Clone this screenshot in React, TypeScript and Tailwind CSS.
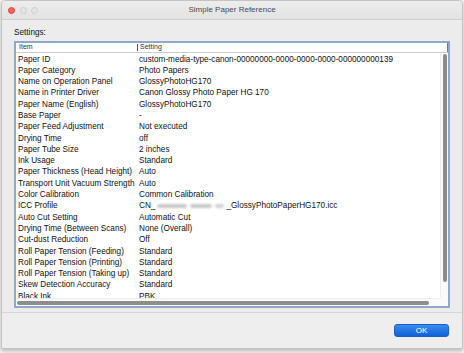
import React from 'react';

const rows: [string, React.ReactNode][] = [
  ['Paper ID', 'custom-media-type-canon-00000000-0000-0000-0000-000000000139'],
  ['Paper Category', 'Photo Papers'],
  ['Name on Operation Panel', 'GlossyPhotoHG170'],
  ['Name in Printer Driver', 'Canon Glossy Photo Paper HG 170'],
  ['Paper Name (English)', 'GlossyPhotoHG170'],
  ['Base Paper', '-'],
  ['Paper Feed Adjustment', 'Not executed'],
  ['Drying Time', 'off'],
  ['Paper Tube Size', '2 inches'],
  ['Ink Usage', 'Standard'],
  ['Paper Thickness (Head Height)', 'Auto'],
  ['Transport Unit Vacuum Strength', 'Auto'],
  ['Color Calibration', 'Common Calibration'],
  [
    'ICC Profile',
    <span className="flex items-center">
      CN_
      {/* redacted part of the file name */}
      <span className="flex h-[11px] w-[71px] items-center gap-[3px] px-[2px]">
        <span className="h-[4px] w-[30px] rounded-full bg-[#c9c9c9] blur-[1.2px]" />
        <span className="h-[4px] w-[22px] rounded-full bg-[#c9c9c9] blur-[1.2px]" />
        <span className="h-[4px] w-[10px] rounded-full bg-[#d2d2d2] blur-[1.2px]" />
      </span>
      _GlossyPhotoPaperHG170.icc
    </span>,
  ],
  ['Auto Cut Setting', 'Automatic Cut'],
  ['Drying Time (Between Scans)', 'None (Overall)'],
  ['Cut-dust Reduction', 'Off'],
  ['Roll Paper Tension (Feeding)', 'Standard'],
  ['Roll Paper Tension (Printing)', 'Standard'],
  ['Roll Paper Tension (Taking up)', 'Standard'],
  ['Skew Detection Accuracy', 'Standard'],
  ['Black Ink', 'PBK'],
];

export default function App() {
  return (
    <div className="w-[464px] h-[353px] bg-[#f4f4f4] px-[1px] pb-[4px] font-['Liberation_Sans',Arial,sans-serif] text-[#111]">
      <div className="flex h-[349px] flex-col overflow-hidden rounded-t-[4px] border border-[#c4c4c4] bg-[#ececec] shadow-[0_2px_4px_rgba(0,0,0,0.25)]">
        {/* title bar */}
        <div className="relative flex h-[19px] items-center border-b border-[#cfcfcf] bg-gradient-to-b from-[#ededed] to-[#e2e2e2] px-[6px]">
          <div className="flex gap-[4.5px]">
            <span className="h-[7px] w-[7px] rounded-full border border-[#e0443e] bg-[#fc605b]" />
            <span className="h-[7px] w-[7px] rounded-full border border-[#cdcdcd] bg-[#e4e4e4]" />
            <span className="h-[7px] w-[7px] rounded-full border border-[#cdcdcd] bg-[#e4e4e4]" />
          </div>
          <div className="absolute inset-0 flex items-center justify-center text-[8px] text-[#4a4a4a]">
            Simple Paper Reference
          </div>
        </div>

        {/* content */}
        <div className="flex flex-col pl-[12px] pr-[12px]">
          <div className="h-[21px] pt-[8px] text-[8.2px] leading-[10px]">Settings:</div>
          <div className="flex h-[267px] flex-col border-2 border-[#93a7cc] bg-white">
            {/* header */}
            <div className="flex h-[10px] shrink-0 items-center border-b border-[#cdcdcd] text-[7px] text-[#333]">
              <div className="w-[121px] pl-[3px]">Item</div>
              <div className="h-[7px] w-px bg-[#555]" />
              <div className="flex-1 pl-[2px]">Setting</div>
              <div className="h-[9px] w-px bg-[#777]" />
            </div>
            <div className="flex min-h-0 flex-1">
              <div className="min-w-0 flex-1 overflow-hidden pt-[0.5px] text-[8.2px]">
                {rows.map(([k, v]) => (
                  <div key={k} className="flex h-[11.3px] items-center whitespace-nowrap leading-[11.3px]">
                    <div className="w-[123px] shrink-0 pl-[2px]">{k}</div>
                    <div>{v}</div>
                  </div>
                ))}
              </div>
              <div className="flex w-[8px] shrink-0 justify-center border-l border-[#ededed] bg-[#fafafa] pt-[1px]">
                <div className="h-[228px] w-[4px] rounded-full bg-[#8d8d8d]" />
              </div>
            </div>
            <div className="flex h-[8px] shrink-0">
              <div className="flex flex-1 items-center border-t border-[#ededed] bg-[#fafafa] pl-[1px]">
                <div className="h-[4px] w-[412px] rounded-full bg-[#8d8d8d]" />
              </div>
              <div className="w-[8px] bg-[#fafafa]" />
            </div>
          </div>
        </div>

        {/* footer */}
        <div className="mt-[4px] flex flex-1 items-start justify-end border-t border-[#d6d6d6] bg-[#eeeeee] pr-[13px] pt-[11px]">
          <button className="flex h-[13px] w-[55px] items-center justify-center rounded-[3px] border border-[#1a5fc4] bg-gradient-to-b from-[#3b8af0] to-[#0c62d6] text-[8px] text-white">
            OK
          </button>
        </div>
      </div>
    </div>
  );
}
